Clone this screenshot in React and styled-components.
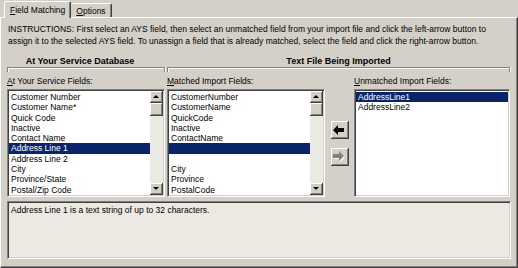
import React from 'react'
import styled, { createGlobalStyle } from 'styled-components'

const GlobalStyle = createGlobalStyle`
  body {
    margin: 0;
    background: #d4d0c8;
  }
`

const Window = styled.div`
  width: 518px;
  height: 268px;
  overflow: hidden;
  display: flex;
  flex-direction: column;
  background: #d4d0c8;
  font-family: 'Liberation Sans', Arial, sans-serif;
  font-size: 8.5px;
  color: #000;
`

const TabStrip = styled.div`
  display: flex;
  align-items: flex-end;
  height: 17px;
  padding-left: 4px;
`

const Tab = styled.div`
  position: relative;
  z-index: ${p => (p.$active ? 1 : 0)};
  height: ${p => (p.$active ? '16px' : '13px')};
  margin-bottom: ${p => (p.$active ? '-1px' : '0')};
  padding: 0 5px;
  display: flex;
  align-items: center;
  background: #d4d0c8;
  border-top: 1px solid #fff;
  border-left: ${p => (p.$first ? '1px solid #fff' : 'none')};
  border-right: 1px solid #404040;
  box-shadow: inset -1px 0 #808080;
  border-radius: 2px 2px 0 0;
  u {
    text-decoration: underline;
  }
`

const TabPage = styled.div`
  flex: 1;
  display: flex;
  flex-direction: column;
  padding: 5px 6px 0 6px;
  border-top: 1px solid #fff;
  border-left: 1px solid #fff;
  border-right: 1px solid #404040;
  border-bottom: 1px solid #404040;
  box-shadow: inset -1px -1px #808080;
`

const Instructions = styled.p`
  margin: 0 0 0 1px;
  line-height: 12px;
`

const Fields = styled.div`
  display: grid;
  grid-template-columns: 158px 158px 25px 156px;
  column-gap: 2px;
  margin-top: 9px;
`

const Heading = styled.div`
  grid-column: ${p => p.$span};
  text-align: center;
  font-weight: bold;
  font-size: 9px;
  line-height: 11px;
  padding-right: ${p => (p.$shift ? p.$shift : '0')};
`

const Bracket = styled.div`
  grid-column: ${p => p.$span};
  height: 4px;
  border-top: 1px solid #808080;
  border-left: 1px solid #808080;
  border-right: 1px solid #808080;
  box-shadow: inset 1px 1px #fff, 1px 0 #fff;
`

const FieldLabel = styled.div`
  grid-column: ${p => p.$col};
  margin-top: 4px;
  height: 11px;
  line-height: 11px;
`

const ListBox = styled.div`
  grid-column: ${p => p.$col};
  margin-top: 2px;
  height: 108px;
  box-sizing: border-box;
  display: flex;
  background: #fff;
  border-top: 1px solid #808080;
  border-left: 1px solid #808080;
  border-right: 1px solid #fff;
  border-bottom: 1px solid #fff;
  box-shadow: inset 1px 1px #404040, inset -1px -1px #d4d0c8;
  padding: 1px;
`

const Items = styled.div`
  flex: 1;
  overflow: hidden;
  padding-top: 1px;
`

const Item = styled.div`
  height: 10.3px;
  line-height: 10.3px;
  padding-left: 2px;
  white-space: nowrap;
  background: ${p => (p.$selected ? '#0a246a' : 'transparent')};
  color: ${p => (p.$selected ? '#fff' : '#000')};
`

const ScrollBar = styled.div`
  width: 13px;
  display: flex;
  flex-direction: column;
  background: #ebe9e4;
`

const Bevel = styled.div`
  box-sizing: border-box;
  background: #d4d0c8;
  border-right: 1px solid #404040;
  border-bottom: 1px solid #404040;
  box-shadow: inset 1px 1px #fff, inset -1px -1px #808080;
`

const ScrollButton = styled(Bevel)`
  height: 12px;
  display: flex;
  align-items: center;
  justify-content: center;
  &::after {
    content: '';
    border-left: 3px solid transparent;
    border-right: 3px solid transparent;
    ${p => (p.$down ? 'border-top: 3px solid #000;' : 'border-bottom: 3px solid #000;')}
  }
`

const Thumb = styled(Bevel)`
  height: 13px;
`

const Track = styled.div`
  flex: 1;
`

const ButtonColumn = styled.div`
  grid-column: 3;
  margin-top: 2px;
  padding-top: 32px;
  display: flex;
  flex-direction: column;
  align-items: center;
  gap: 9px;
`

const ArrowButton = styled(Bevel)`
  width: 18px;
  height: 18px;
  display: flex;
  align-items: center;
  justify-content: center;
`

const Description = styled.div`
  margin-top: 4px;
  height: 58px;
  box-sizing: border-box;
  background: #ece9e3;
  border-top: 1px solid #808080;
  border-left: 1px solid #808080;
  border-right: 1px solid #fff;
  border-bottom: 1px solid #fff;
  box-shadow: inset 1px 1px #404040, inset -1px -1px #d4d0c8;
  padding: 3px 3px;
  line-height: 11px;
`

const aysFields = [
  'Customer Number',
  'Customer Name*',
  'Quick Code',
  'Inactive',
  'Contact Name',
  'Address Line 1',
  'Address Line 2',
  'City',
  'Province/State',
  'Postal/Zip Code'
]

const matchedFields = [
  'CustomerNumber',
  'CustomerName',
  'QuickCode',
  'Inactive',
  'ContactName',
  '',
  '',
  'City',
  'Province',
  'PostalCode'
]

const unmatchedFields = ['AddressLine1', 'AddressLine2']

const Scroller = () => (
  <ScrollBar>
    <ScrollButton />
    <Thumb />
    <Track />
    <ScrollButton $down />
  </ScrollBar>
)

const LeftArrow = () => (
  <svg width="12" height="10" viewBox="0 0 12 10">
    <path d="M0 5 L5 0 L5 3 L11 3 L11 7 L5 7 L5 10 Z" fill="#000" />
  </svg>
)

const RightArrow = () => (
  <svg width="13" height="11" viewBox="0 0 13 11">
    <path d="M12 6 L7 1 L7 4 L1 4 L1 8 L7 8 L7 11 Z" fill="#fff" />
    <path d="M11 5 L6 0 L6 3 L0 3 L0 7 L6 7 L6 10 Z" fill="#808080" />
  </svg>
)

const App = () => {
  return (
    <Window>
      <GlobalStyle />
      <TabStrip>
        <Tab $active $first>
          <span><u>F</u>ield Matching</span>
        </Tab>
        <Tab>
          <span><u>O</u>ptions</span>
        </Tab>
      </TabStrip>
      <TabPage>
        <Instructions>
          INSTRUCTIONS: First select an AYS field, then select an unmatched field from your import file and click the left-arrow button to
          assign it to the selected AYS field. To unassign a field that is already matched, select the field and click the right-arrow button.
        </Instructions>
        <Fields>
          <Heading $span="1" $shift="12px">At Your Service Database</Heading>
          <Heading $span="2 / 5">Text File Being Imported</Heading>
          <Bracket $span="1" />
          <Bracket $span="2 / 5" />
          <FieldLabel $col="1"><u>A</u>t Your Service Fields:</FieldLabel>
          <FieldLabel $col="2"><u>M</u>atched Import Fields:</FieldLabel>
          <FieldLabel $col="4"><u>U</u>nmatched Import Fields:</FieldLabel>
          <ListBox $col="1">
            <Items>
              {aysFields.map((f, i) => (
                <Item key={f} $selected={i === 5}>{f}</Item>
              ))}
            </Items>
            <Scroller />
          </ListBox>
          <ListBox $col="2">
            <Items>
              {matchedFields.map((f, i) => (
                <Item key={i} $selected={i === 5}>{f}</Item>
              ))}
            </Items>
            <Scroller />
          </ListBox>
          <ButtonColumn>
            <ArrowButton><LeftArrow /></ArrowButton>
            <ArrowButton><RightArrow /></ArrowButton>
          </ButtonColumn>
          <ListBox $col="4">
            <Items>
              {unmatchedFields.map((f, i) => (
                <Item key={f} $selected={i === 0}>{f}</Item>
              ))}
            </Items>
          </ListBox>
        </Fields>
        <Description>Address Line 1 is a text string of up to 32 characters.</Description>
      </TabPage>
    </Window>
  )
}

export default App
